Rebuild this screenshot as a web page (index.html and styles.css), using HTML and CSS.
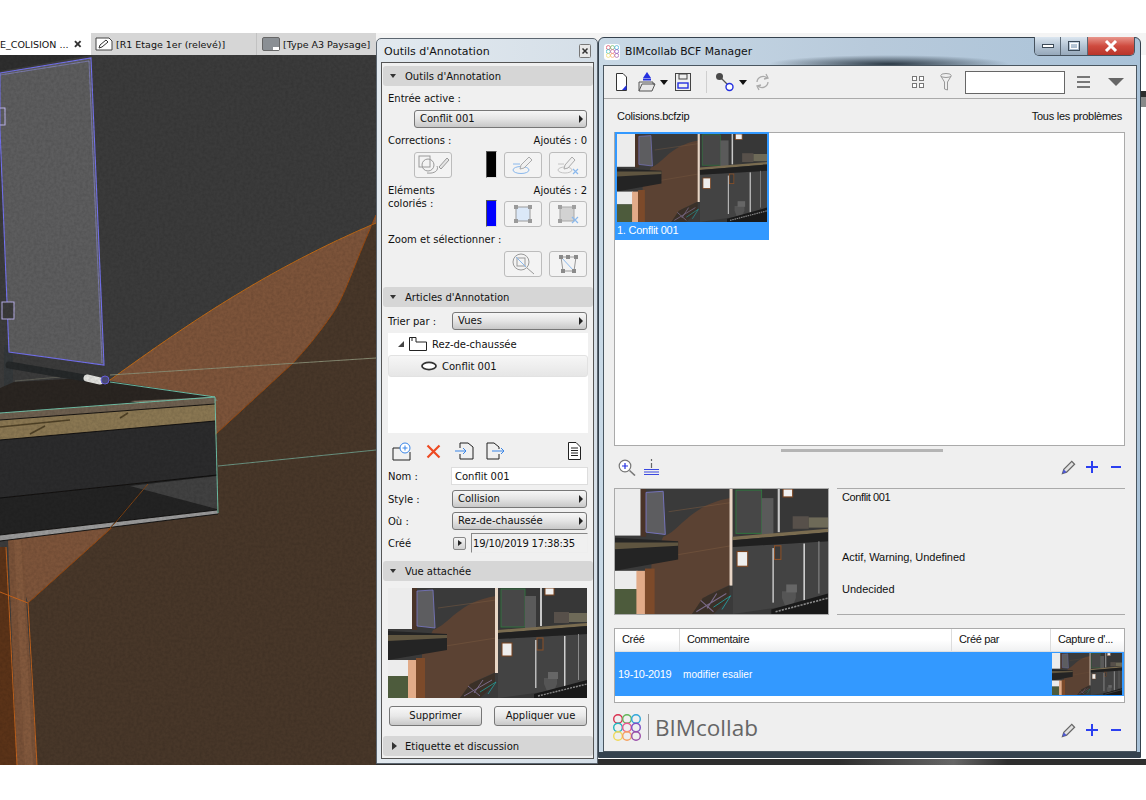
FILE: index.html
```html
<!DOCTYPE html>
<html lang="fr">
<head>
    <meta charset="UTF-8">
    <title>BIMcollab BCF Manager</title>
    <link rel="stylesheet" href="styles.css">
</head>
<body>
    <!-- shared drawings -->
    <svg class="defs" width="0" height="0">
        <symbol id="model-thumb" viewBox="0 0 199 110" preserveAspectRatio="none">
            <rect width="199" height="110" fill="#3a3a3a"/>
            <rect width="24" height="41" fill="#ececec"/>
            <rect x="24" width="5" height="42" fill="#4a3428"/>
            <polygon points="29,3 45,2 47,40 29,38" fill="#5d5d60" stroke="#7a78c8" stroke-width="0.8"/>
            <path d="M45 42 C62 36 70 14 108 8 V84 L86 94 L72 110 H34 V66 Z" fill="#5b4233"/>
            <path d="M50 20 L108 12 M45 60 L108 50" stroke="#7a5a40" stroke-width="0.5"/>
            <polygon points="0,43 59,46 59,62 0,72" fill="#242424"/>
            <polygon points="0,47 59,47 59,50 0,53" fill="#5f5540"/>
            <rect y="72" width="21" height="16" fill="#ececec"/>
            <rect y="88" width="22" height="22" fill="#4d5b3c"/>
            <rect x="20" y="72" width="8" height="38" fill="#e2ab88"/>
            <rect x="28" y="70" width="9" height="40" fill="#7c4a2a"/>
            <rect x="107" width="3" height="85" fill="#e8d6c6"/>
            <rect x="110" width="89" height="110" fill="#373737"/>
            <rect x="113" y="1" width="24" height="38" fill="#474747" stroke="#2f7a3f" stroke-width="0.8"/>
            <rect x="137" y="8" width="11" height="32" fill="#5a5a5a"/>
            <rect x="152" width="2" height="38" fill="#c8c8c8"/>
            <rect x="157" y="0" width="9" height="7" fill="#f0f0f0" stroke="#7a4420"/>
            <rect x="166" y="24" width="15" height="11" fill="#57504a"/>
            <rect x="181" y="25" width="18" height="9" fill="#6e6a58"/>
            <polygon points="110,51 199,46 199,98 110,110" fill="#434343"/>
            <polygon points="110,42 199,35 199,38 110,45" fill="#7a6c50"/>
            <polygon points="110,45 199,38 199,46 110,51" fill="#202020"/>
            <rect x="114" y="55" width="10" height="13" fill="#eeeeee" stroke="#7a4420"/>
            <rect x="149" y="50" width="6" height="12" fill="#3a3a3a" stroke="#8a5028"/>
            <rect x="147" y="52" width="1.5" height="48" fill="#bbbbbb"/>
            <rect x="176" y="48" width="1.5" height="50" fill="#cfcfcf"/>
            <rect x="190" y="46" width="1" height="46" fill="#8a8a8a"/>
            <path d="M156 90 h13 v6 l-3 7 h-7 l-3 -7 z" fill="#555555"/>
            <rect x="160" y="84" width="10" height="7" fill="#666666"/>
            <polygon points="146,110 146,106 199,92 199,110" fill="#191919"/>
            <path d="M150 108 L199 96" stroke="#8a8a8a" stroke-width="1.4" stroke-dasharray="2 1"/>
            <polygon points="72,110 82,96 107,85 107,96 92,110" fill="#3a3028"/>
            <path d="M76 108 L104 92 M86 105 L95 92 M80 98 L92 108" stroke="#7a6a88" stroke-width="1"/>
            <path d="M92 104 L108 94 L100 106" stroke="#2aa" stroke-width="0.7" fill="none"/>
        </symbol>
        <symbol id="logo-rings" viewBox="0 0 28 27">
            <g fill="none" stroke-width="1.4">
                <circle cx="5" cy="5" r="4.3" stroke="#d9304f"/>
                <circle cx="14" cy="5" r="4.3" stroke="#62b65a"/>
                <circle cx="23" cy="5" r="4.3" stroke="#2fa6d9"/>
                <circle cx="5" cy="13.5" r="4.3" stroke="#1fb3bd"/>
                <circle cx="14" cy="13.5" r="4.3" stroke="#e8588f"/>
                <circle cx="23" cy="13.5" r="4.3" stroke="#7c4fc4"/>
                <circle cx="5" cy="22" r="4.3" stroke="#f0d95a"/>
                <circle cx="14" cy="22" r="4.3" stroke="#f5a263"/>
                <circle cx="23" cy="22" r="4.3" stroke="#9b4fa8"/>
            </g>
        </symbol>
        <symbol id="pencil" viewBox="0 0 16 16">
            <path d="M1.5 14.5 L3 10 L11.5 1.5 L14.5 4.5 L6 13 Z" fill="#e0e0e0" stroke="#666" stroke-width="1.3"/>
            <path d="M1.5 14.5 L3 10 L6 13 Z" fill="#4a55d8"/>
        </symbol>
        <symbol id="plus" viewBox="0 0 12 12">
            <path d="M6 0 V12 M0 6 H12" stroke="#2b3ff0" stroke-width="2"/>
        </symbol>
        <symbol id="minus" viewBox="0 0 10 12">
            <path d="M0 6 H10" stroke="#2b3ff0" stroke-width="2"/>
        </symbol>
    </svg>

    <div class="desktop">
        <div class="tabs">
            <div class="tab tab-active">
                <span class="tab-name">E_COLISION ...</span>
                <svg class="tab-x" width="8" height="8" viewBox="0 0 8 8"><path d="M1 1 L7 7 M7 1 L1 7" stroke="#333" stroke-width="2"/></svg>
            </div>
            <div class="tab tab-plan">
                <svg width="18" height="14" viewBox="0 0 18 14"><path d="M1 1 H14 L17 4 V13 H1 Z" fill="#fff" stroke="#444"/><path d="M4 11 L5 8 L11 3 L13 5 L7 10 Z" fill="#fff" stroke="#333"/></svg>
                <span>[R1 Etage 1er (relevé)]</span>
            </div>
            <div class="tab tab-layout">
                <svg width="18" height="14" viewBox="0 0 18 14"><rect x="0.5" y="0.5" width="17" height="13" rx="1.5" fill="#8a8f94" stroke="#666"/><rect x="11" y="10" width="6" height="3" fill="#fff"/></svg>
                <span>[Type A3 Paysage]</span>
            </div>
            <div class="tab-rest"></div>
        </div>

        <div class="main">
            <svg class="scene" viewBox="0 55 376 710" width="376" height="710">
                <defs>
                    <filter id="grain" x="0" y="0" width="100%" height="100%">
                        <feTurbulence type="fractalNoise" baseFrequency="0.35" numOctaves="2" seed="4"/>
                        <feColorMatrix values="0 0 0 0 0  0 0 0 0 0  0 0 0 0 0  0 0 0 0.2 -0.06"/>
                    </filter>
                </defs>
                <rect x="0" y="55" width="376" height="710" fill="#3b3b3b"/>
                <polygon points="0,55 92,55 0,71" fill="#2e2e2e"/>
                <path d="M376 215 C352 270 345 295 333 313 C318 335 305 350 293 363 L217 433 L28 603 L37 765 H376 Z" fill="#483729"/>
                <path d="M110 380 C190 322 270 268 376 223 V215 C352 270 345 295 333 313 C318 335 305 350 293 363 L217 433 L28 603 L8 540 V400 Z" fill="#7d543a"/>
                <path d="M110 380 C190 322 270 268 376 223" fill="none" stroke="#c06a14"/>
                <path d="M376 215 C352 270 345 295 333 313 C318 335 305 350 293 363 L217 433 L28 603" fill="none" stroke="#9a4a10"/>
                <polygon points="0,547 6,547 17,765 0,765" fill="#5b3318"/>
                <polygon points="8,540 22,538 37,765 17,765" fill="#7a5238"/>
                <polygon points="14,540 21,540 33,765 25,765" fill="#83593d"/>
                <path d="M6 547 L17 765 M28 603 L37 765 M0 592 L28 603" fill="none" stroke="#d0661a" stroke-width="0.9"/>
                <path d="M110 375 L376 358" stroke="#8c9178" stroke-width="0.9"/>
                <rect x="4" y="345" width="9" height="45" fill="#34383a"/>
                <polygon points="0,388 14,382 85,378 110,381 215,397 0,413" fill="#2a2521"/>
                <polygon points="130,401 215,397 218,401 140,403" fill="#7b6d5d"/>
                <polygon points="0,413 215,398 215,404 0,420" fill="#6d5f4f"/>
                <polygon points="0,420 215,404 215,421 0,440" fill="#8a7752"/>
                <path d="M0 427 L70 420 M30 434 L45 426 M120 418 L128 413" stroke="#4f4126" stroke-width="1.5"/>
                <polygon points="0,440 215,421 217,475 0,498" fill="#2b2b2c"/>
                <polygon points="0,498 217,475 217,510 0,535" fill="#232323"/>
                <polygon points="130,486 217,476 217,509" fill="#414141"/>
                <polygon points="0,535 217,510 218,514 0,541" fill="#9a9a9a"/>
                <path d="M0 420 L215 404 M0 440 L215 421 M0 498 L217 475 M0 535 L217 510 M0 541 L218 514" fill="none" stroke="#0c0c0c" stroke-width="0.9"/>
                <path d="M148 484 L115 523 L108 530" stroke="#8a4a16" stroke-width="0.9"/>
                <path d="M110 382 L215 397 L218 513 M0 413 L215 397" fill="none" stroke="#72cdb4" stroke-width="0.9"/>
                <path d="M218 466 L376 450" stroke="#6f9e8c" stroke-width="0.9"/>
                <path d="M15 381 L60 377" stroke="#6b6b60" stroke-width="0.7"/>
                <polygon points="0,73 91,58 104,365 9,352 0,130" fill="#5d5d5e"/>
                <polygon points="0,73 91,58 104,365 9,352 0,130" fill="none" stroke="#7472f0" stroke-width="1.1"/>
                <path d="M0 75 L89 61 L102 363" fill="none" stroke="#8f8ee0" stroke-width="0.6"/>
                <rect x="-2" y="108" width="7" height="17" fill="none" stroke="#c0b8f0"/>
                <rect x="2" y="302" width="12" height="17" fill="#3a3a3a" stroke="#b8b0e8"/>
                <path d="M9 365 L85 378" stroke="#252829" stroke-width="7" stroke-linecap="round"/>
                <path d="M87 378 L100 381" stroke="#e4e4e0" stroke-width="7" stroke-linecap="round"/>
                <circle cx="105" cy="380" r="4" fill="#4b4b78" stroke="#6a62e0"/>
                <rect x="0" y="55" width="376" height="710" filter="url(#grain)"/>
            </svg>
            <div class="behind">
                <div class="behind-dark"></div>
                <div class="behind-tab"></div>
                <div class="behind-strip"></div>
            </div>
        </div>

        <!-- annotation palette -->
        <div class="window palette">
            <div class="pal-title">
                <span>Outils d'Annotation</span>
                <svg class="pal-close" width="12" height="14" viewBox="0 0 12 14"><rect x="0.5" y="0.5" width="11" height="13" rx="1" fill="#e8e8e8" stroke="#777"/><path d="M3.5 4.5 L8.5 9.5 M8.5 4.5 L3.5 9.5" stroke="#333" stroke-width="1.5"/></svg>
            </div>
            <div class="pal-body">
                <div class="sec-head"><i class="arrow-down"></i>Outils d'Annotation</div>
                <div class="sec tools">
                    <div class="lbl lbl-first">Entrée active :</div>
                    <div class="drop drop-active">Conflit 001</div>

                    <div class="lbl-row corr-labels"><span>Corrections :</span><span>Ajoutés : 0</span></div>
                    <div class="btn-row">
                        <div class="tool-btn tool-wide">
                            <svg width="36" height="24" viewBox="0 0 36 24" fill="none" stroke="#9a9a9a"><rect x="4" y="3" width="11" height="11"/><circle cx="13" cy="12" r="6"/><path d="M12 20 C20 21 24 17 22 13"/><path d="M24 14 L32 5 L34 7 L26 16 Z" fill="#e4e4e4"/></svg>
                        </div>
                        <div class="swatch swatch-black"></div>
                        <div class="tool-btn">
                            <svg width="26" height="22" viewBox="0 0 26 22" fill="none"><ellipse cx="11" cy="16" rx="8" ry="3.5" stroke="#8ab8ec"/><path d="M3 10 H10" stroke="#8ab8ec"/><path d="M10 15 L11 11 L19 3 L22 6 L14 14 Z" fill="#f0f0f0" stroke="#aaa"/></svg>
                        </div>
                        <div class="tool-btn">
                            <svg width="26" height="22" viewBox="0 0 26 22" fill="none"><ellipse cx="10" cy="16" rx="7" ry="3" stroke="#c4c4c4"/><path d="M3 10 H9" stroke="#c4c4c4"/><path d="M9 15 L10 11 L17 3 L20 6 L13 14 Z" fill="#f0f0f0" stroke="#aaa"/><path d="M18 15 L23 20 M23 15 L18 20" stroke="#8ab8ec" stroke-width="1.2"/></svg>
                        </div>
                    </div>

                    <div class="lbl-row elem-labels"><span>Eléments</span><span>Ajoutés : 2</span></div>
                    <div class="btn-row elem-row">
                        <span class="elem-lbl">coloriés :</span>
                        <div class="swatch swatch-blue"></div>
                        <div class="tool-btn">
                            <svg width="22" height="20" viewBox="0 0 22 20"><rect x="4" y="3" width="14" height="14" fill="#dbe8f8" stroke="#9a9a9a"/><g fill="#9a9a9a"><rect x="2" y="1" width="4" height="4"/><rect x="16" y="1" width="4" height="4"/><rect x="2" y="15" width="4" height="4"/><rect x="16" y="15" width="4" height="4"/></g></svg>
                        </div>
                        <div class="tool-btn">
                            <svg width="24" height="20" viewBox="0 0 24 20"><rect x="4" y="3" width="14" height="14" fill="#d2d2d2" stroke="#a8a8a8"/><g fill="#a0a0a0"><rect x="2" y="1" width="4" height="4"/><rect x="16" y="1" width="4" height="4"/><rect x="2" y="15" width="4" height="4"/></g><path d="M16 13 L22 19 M22 13 L16 19" stroke="#8ab8ec" stroke-width="1.2"/></svg>
                        </div>
                    </div>

                    <div class="lbl zoom-lbl">Zoom et sélectionner :</div>
                    <div class="btn-row zoom-row">
                        <div class="tool-btn">
                            <svg width="26" height="24" viewBox="0 0 26 24" fill="none" stroke="#999"><circle cx="11" cy="10" r="8"/><rect x="7" y="6" width="8" height="8"/><path d="M6 5 L16 15" stroke="#8ab8ec"/><path d="M17 16 L24 22"/></svg>
                        </div>
                        <div class="tool-btn">
                            <svg width="24" height="22" viewBox="0 0 24 22"><path d="M5 4 H20 L18 18 H7 Z" fill="none" stroke="#999"/><path d="M5 4 L18 18" stroke="#8ab8ec"/><g fill="#8a8a8a"><rect x="3" y="2" width="4" height="4"/><rect x="10" y="2" width="4" height="4"/><rect x="18" y="2" width="4" height="4"/><rect x="5" y="16" width="4" height="4"/><rect x="16" y="16" width="4" height="4"/></g></svg>
                        </div>
                    </div>
                </div>

                <div class="sec-head"><i class="arrow-down"></i>Articles d'Annotation</div>
                <div class="sec articles">
                    <div class="field-row trier">
                        <span>Trier par :</span>
                        <div class="drop">Vues</div>
                    </div>
                    <div class="tree">
                        <div class="tree-row">
                            <i class="tree-arrow"></i>
                            <svg width="18" height="14" viewBox="0 0 18 14" fill="none" stroke="#222"><path d="M0.5 13.5 V0.5 H7 V5 H17.5 V13.5 Z"/><path d="M3 1 V4" stroke="#222"/></svg>
                            <span>Rez-de-chaussée</span>
                        </div>
                        <div class="tree-row tree-sel">
                            <svg width="16" height="10" viewBox="0 0 16 10"><ellipse cx="8" cy="5" rx="7" ry="3.6" fill="#fff" stroke="#333" stroke-width="1.8"/></svg>
                            <span>Conflit 001</span>
                        </div>
                    </div>
                    <div class="art-tools">
                        <svg width="20" height="19" viewBox="0 0 20 19" fill="none"><path d="M1 6 H10 M1 6 V18 H18 V10" stroke="#222"/><circle cx="13" cy="6" r="5" fill="#fff" stroke="#3a86e8"/><path d="M13 3.5 V8.5 M10.5 6 H15.5" stroke="#3a86e8"/></svg>
                        <svg class="red-x" width="15" height="15" viewBox="0 0 15 15"><path d="M1.5 1.5 L13.5 13.5 M13.5 1.5 L1.5 13.5" stroke="#ee4a22" stroke-width="2.2"/></svg>
                        <svg class="doc-in" width="19" height="18" viewBox="0 0 19 18" fill="none"><path d="M5 6 V1 H13 L18 5 V17 H5 V12" stroke="#222"/><path d="M0 9 H11 M8 6 L11 9 L8 12" stroke="#3a86e8"/></svg>
                        <svg class="doc-out" width="19" height="18" viewBox="0 0 19 18" fill="none"><path d="M13 7 V5 L8 1 H1 V17 H13 V12" stroke="#222"/><path d="M6 9 H18 M15 6 L18 9 L15 12" stroke="#3a86e8"/></svg>
                        <svg class="doc-list" width="13" height="18" viewBox="0 0 13 18" fill="#fff" stroke="#222"><path d="M0.5 0.5 H8 L12.5 5 V17.5 H0.5 Z"/><path d="M3 6 H10 M3 8.5 H10 M3 11 H10 M3 13.5 H10"/></svg>
                    </div>
                    <div class="field-row nom">
                        <span>Nom :</span>
                        <div class="text-field">Conflit 001</div>
                    </div>
                    <div class="field-row style-row">
                        <span>Style :</span>
                        <div class="drop">Collision</div>
                    </div>
                    <div class="field-row ou">
                        <span>Où :</span>
                        <div class="drop">Rez-de-chaussée</div>
                    </div>
                    <div class="field-row cree">
                        <span>Créé</span>
                        <div class="mini-btn"></div>
                        <div class="date-field">19/10/2019 17:38:35</div>
                    </div>
                </div>

                <div class="sec-head"><i class="arrow-down"></i>Vue attachée</div>
                <div class="sec attached">
                    <svg class="thumb attached-img"><use href="#model-thumb"/></svg>
                    <div class="attached-btns">
                        <div class="push">Supprimer</div>
                        <div class="push">Appliquer vue</div>
                    </div>
                </div>

                <div class="sec-head"><i class="arrow-right"></i>Etiquette et discussion</div>
            </div>
        </div>

        <!-- BCF manager -->
        <div class="window manager">
            <div class="mgr-title">
                <div class="mgr-icon"><svg width="13" height="13"><use href="#logo-rings"/></svg></div>
                <span>BIMcollab BCF Manager</span>
                <div class="caption">
                    <div class="cap-btn cap-min"><svg width="12" height="6" viewBox="0 0 12 6"><rect x="0.5" y="1.5" width="11" height="3" fill="#fff" stroke="#3c4a58"/></svg></div>
                    <div class="cap-btn cap-max"><svg width="12" height="10" viewBox="0 0 12 10"><rect x="0.5" y="0.5" width="11" height="9" fill="none" stroke="#3c4a58"/><rect x="2.5" y="2.5" width="7" height="5" fill="none" stroke="#fff"/></svg></div>
                    <div class="cap-btn cap-close"><svg width="14" height="12" viewBox="0 0 14 12"><path d="M2 1 L12 11 M12 1 L2 11" stroke="#fff" stroke-width="3"/></svg></div>
                </div>
            </div>
            <div class="client">
                <div class="toolbar">
                    <svg class="tb-new" width="11" height="18" viewBox="0 0 11 18"><path d="M0.5 0.5 H7 L10.5 4 V17.5 H0.5 Z" fill="#fff" stroke="#333"/><path d="M6 17 L10.5 17 V12 Z" fill="#2430e0"/></svg>
                    <svg class="tb-open" width="18" height="20" viewBox="0 0 18 20"><path d="M9 0 L13 6 H5 Z" fill="#2430e0"/><rect x="5" y="6.5" width="8" height="2" fill="#2430e0"/><path d="M1 10 H15 V12 H17 L14 19 H1 Z" fill="#e8e8e8" stroke="#555"/><path d="M1 19 L4 12 H17" fill="none" stroke="#555"/></svg>
                    <i class="caret tb-caret"></i>
                    <svg class="tb-save" width="16" height="18" viewBox="0 0 16 18" fill="none"><rect x="0.5" y="0.5" width="15" height="17" stroke="#444"/><rect x="4" y="1" width="8" height="5" stroke="#444"/><rect x="3" y="10" width="10" height="5" stroke="#2430e0" stroke-width="1.4"/></svg>
                    <div class="tb-sep"></div>
                    <svg class="tb-node" width="20" height="20" viewBox="0 0 20 20"><path d="M5 5 L14 14" stroke="#555" stroke-width="1.2"/><circle cx="4.5" cy="4.5" r="3.5" fill="#4a4a4a"/><circle cx="14.5" cy="15" r="3.5" fill="#fff" stroke="#2430e0" stroke-width="1.4"/></svg>
                    <i class="caret"></i>
                    <svg class="tb-refresh" width="17" height="18" viewBox="0 0 17 18" fill="none" stroke="#aaa" stroke-width="1.3"><path d="M3 9 A6 6 0 0 1 13 5"/><path d="M14 9 A6 6 0 0 1 4 13"/><path d="M12 1 L14 5 L10 6"/><path d="M5 17 L3 13 L7 12"/></svg>
                    <div class="tb-right">
                        <svg width="12" height="12" viewBox="0 0 12 12" fill="#fff" stroke="#777"><rect x="0.5" y="0.5" width="4" height="4"/><rect x="7.5" y="0.5" width="4" height="4"/><rect x="0.5" y="7.5" width="4" height="4"/><rect x="7.5" y="7.5" width="4" height="4"/></svg>
                        <svg class="tb-funnel" width="12" height="18" viewBox="0 0 12 18" fill="none" stroke="#999"><ellipse cx="6" cy="2.5" rx="5.2" ry="2"/><path d="M0.8 3 L4.5 9 V16 L7.5 17 V9 L11.2 3"/></svg>
                        <div class="tb-search"></div>
                        <div class="tb-menu"><i></i><i></i><i></i></div>
                        <i class="tb-down"></i>
                    </div>
                </div>

                <div class="file-row"><span>Colisions.bcfzip</span><span>Tous les problèmes</span></div>

                <div class="issue-list">
                    <div class="issue-card">
                        <svg class="thumb issue-img"><use href="#model-thumb"/></svg>
                        <div class="issue-label">1. Conflit 001</div>
                    </div>
                </div>
                <div class="splitter"></div>

                <div class="detail-tools">
                    <svg width="18" height="17" viewBox="0 0 18 17" fill="none"><circle cx="7" cy="7" r="5.8" fill="#fff" stroke="#777" stroke-width="1.2"/><path d="M7 4 V10 M4 7 H10" stroke="#2430e0" stroke-width="1.2"/><path d="M11.5 11.5 L17 16.5" stroke="#777" stroke-width="1.6"/></svg>
                    <svg class="info-lines" width="15" height="17" viewBox="0 0 15 17" fill="none"><path d="M7.5 0 V2 M7.5 4 V9" stroke="#666" stroke-width="1.2"/><path d="M0 10.5 H15 M0 13 H15 M0 15.5 H15" stroke="#3a48e0"/></svg>
                    <div class="edit-group">
                        <svg width="15" height="15"><use href="#pencil"/></svg>
                        <svg width="12" height="12"><use href="#plus"/></svg>
                        <svg width="10" height="12"><use href="#minus"/></svg>
                    </div>
                </div>

                <div class="detail">
                    <svg class="thumb detail-img"><use href="#model-thumb"/></svg>
                    <div class="detail-text">
                        <div class="detail-name">Conflit 001</div>
                        <div class="detail-status">Actif, Warning, Undefined</div>
                        <div class="detail-res">Undecided</div>
                    </div>
                </div>

                <div class="comments">
                    <div class="c-row c-head">
                        <div class="c-date">Créé</div>
                        <div class="c-text">Commentaire</div>
                        <div class="c-by">Créé par</div>
                        <div class="c-shot">Capture d'...</div>
                    </div>
                    <div class="c-row c-sel">
                        <div class="c-date">19-10-2019</div>
                        <div class="c-text">modifier esalier</div>
                        <div class="c-by"></div>
                        <div class="c-shot"><svg class="thumb c-img"><use href="#model-thumb"/></svg></div>
                    </div>
                </div>

                <div class="mgr-foot">
                    <svg class="foot-logo" width="28" height="27"><use href="#logo-rings"/></svg>
                    <div class="logo-sep"></div>
                    <span class="logo-text">BIMcollab</span>
                    <div class="edit-group">
                        <svg width="15" height="15"><use href="#pencil"/></svg>
                        <svg width="12" height="12"><use href="#plus"/></svg>
                        <svg width="10" height="12"><use href="#minus"/></svg>
                    </div>
                </div>
            </div>
        </div>
    </div>
</body>
</html>
```

FILE: styles.css
```css
:root {
    --panel: #f0f0f0;
    --head: #d6d6d6;
    --line: #aaaaaa;
    --select: #3399ff;
}

* {
    box-sizing: border-box;
}

body {
    margin: 0;
    background: #fff;
    font-family: "DejaVu Sans", sans-serif;
    font-size: 10px;
    color: #111;
}

.defs {
    position: absolute;
}

.desktop {
    position: relative;
    width: 1146px;
    height: 800px;
    padding-top: 33px;
    overflow: hidden;
}

/* tab bar of the host application */
.tabs {
    display: flex;
    height: 22px;
    background: #d6d6d6;
    font-size: 9.5px;
}

.tab {
    display: flex;
    align-items: center;
    gap: 3px;
    border-right: 1px solid #c2c2c2;
}

.tab-active {
    width: 91px;
    background: #fff;
    gap: 6px;
    overflow: hidden;
    justify-content: flex-end;
    padding-right: 9px;
    border: none;
}

.tab-name {
    white-space: nowrap;
}

.tab-plan {
    width: 166px;
    padding-left: 4px;
}

.tab-layout {
    width: 119px;
    padding-left: 5px;
    border: none;
}

.tab-rest {
    flex: 1;
    background: #f4f4f4;
}

.main {
    display: flex;
    height: 710px;
}

.scene {
    display: block;
    flex: none;
}

.behind {
    flex: 1;
    display: flex;
    flex-direction: column;
    background: #fff;
}

.behind-dark {
    height: 6px;
    margin-top: 36px;
    background: #2e2e2e;
}

.behind-tab {
    height: 10px;
    background: #8a8a8a;
}

.behind-strip {
    height: 6px;
    margin-top: auto;
    background: linear-gradient(90deg, #2e2e2e 60%, #666 75%, #2e2e2e 82%);
}

.window {
    position: absolute;
}

/* annotation palette */
.palette {
    left: 376px;
    top: 38px;
    width: 222px;
    height: 726px;
    background: linear-gradient(90deg, #e2e9ef, #d5dfe8);
    border: 1px solid #5c6670;
    border-radius: 5px 5px 0 0;
    padding: 0 3px 4px 4px;
    display: flex;
    flex-direction: column;
}

.pal-title {
    height: 23px;
    flex: none;
    display: flex;
    align-items: center;
    justify-content: space-between;
    padding: 1px 3px 0 3px;
    font-size: 11px;
}

.pal-body {
    flex: 1;
    background: var(--panel);
    border: 1px solid #555;
    padding: 3px 0 0 1px;
    overflow: hidden;
}

.sec-head {
    height: 20px;
    display: flex;
    align-items: center;
    background: var(--head);
    border-radius: 3px;
    padding-left: 7px;
}

.arrow-down {
    width: 0;
    height: 0;
    margin-right: 9px;
    border-left: 3.5px solid transparent;
    border-right: 3.5px solid transparent;
    border-top: 4px solid #333;
}

.arrow-right {
    width: 0;
    height: 0;
    margin: 0 8px 0 2px;
    border-top: 4px solid transparent;
    border-bottom: 4px solid transparent;
    border-left: 5px solid #333;
}

.sec {
    padding: 0 6px 0 5px;
    display: flex;
    flex-direction: column;
}

.lbl {
    height: 12px;
    line-height: 12px;
}

.lbl-first {
    margin-top: 7px;
}

.lbl-row {
    display: flex;
    justify-content: space-between;
    height: 12px;
    line-height: 12px;
}

.drop {
    position: relative;
    flex: 1;
    height: 18px;
    line-height: 16px;
    padding-left: 5px;
    border: 1px solid #777;
    border-radius: 3px;
    background: linear-gradient(#f6f6f6, #e4e4e4 50%, #c8c8c8);
}

.drop::after {
    content: "";
    position: absolute;
    right: 3px;
    top: 4px;
    border-top: 4px solid transparent;
    border-bottom: 4px solid transparent;
    border-left: 4px solid #222;
}

.drop-active {
    flex: none;
    margin: 5px 0 0 26px;
}

.corr-labels {
    margin-top: 7px;
}

.btn-row {
    display: flex;
    justify-content: flex-end;
    align-items: flex-end;
    gap: 7px;
    margin-top: 4px;
    height: 27px;
}

.tool-btn {
    width: 38px;
    height: 26px;
    display: flex;
    align-items: center;
    justify-content: center;
    border: 1px solid #bcbcbc;
    border-radius: 3px;
    background: #f3f3f3;
}

.tool-wide {
    margin-left: 26px;
    margin-right: auto;
}

.swatch {
    width: 11px;
    height: 27px;
    border: 1px solid;
    border-color: #555 #ddd #ddd #555;
}

.swatch-black {
    background: #000;
}

.swatch-blue {
    background: #0000ff;
}

.elem-labels {
    margin-top: 7px;
}

.elem-row {
    margin-top: 0;
    height: 30px;
}

.elem-lbl {
    margin-right: auto;
    align-self: flex-start;
    line-height: 13px;
}

.zoom-lbl {
    margin-top: 7px;
}

.zoom-row {
    margin-top: 5px;
    height: 26px;
    margin-bottom: 10px;
}

.field-row {
    display: flex;
    align-items: center;
}

.field-row > span {
    flex: none;
    width: 64px;
}

.trier {
    margin-top: 5px;
}

.tree {
    height: 100px;
    margin: 3px -1px 0 0;
    background: #fff;
}

.tree-row {
    height: 22px;
    display: flex;
    align-items: center;
}

.tree-row span {
    margin-left: 5px;
}

.tree-arrow {
    width: 0;
    height: 0;
    margin: 0 5px 0 10px;
    border-bottom: 6px solid #444;
    border-left: 6px solid transparent;
}

.tree-sel {
    padding-left: 32px;
    border: 1px solid #e2e2e2;
    border-radius: 3px;
    background: linear-gradient(#f6f6f6, #e6e6e6);
}

.tree-sel span {
    margin-left: 5px;
}

.art-tools {
    display: flex;
    align-items: center;
    height: 20px;
    margin-top: 8px;
    padding-left: 4px;
}

.red-x {
    margin-left: 14px;
}

.doc-in {
    margin-left: 14px;
}

.doc-out {
    margin-left: 12px;
}

.doc-list {
    margin-left: auto;
    margin-right: 6px;
}

.nom {
    margin: 6px -1px 0 0;
}

.nom > span {
    width: 63px;
}

.text-field {
    flex: 1;
    height: 18px;
    line-height: 17px;
    padding-left: 3px;
    background: #fff;
    border: 1px solid #ddd;
}

.style-row {
    margin-top: 5px;
}

.ou {
    margin-top: 4px;
}

.cree {
    margin: 3px -1px 8px 0;
}

.cree > span {
    width: 65px;
}

.mini-btn {
    position: relative;
    width: 13px;
    height: 13px;
    margin-right: 5px;
    border: 1px solid #888;
    border-radius: 2px;
    background: linear-gradient(#f4f4f4, #d0d0d0);
}

.mini-btn::after {
    content: "";
    position: absolute;
    left: 4px;
    top: 2px;
    border-top: 3.5px solid transparent;
    border-bottom: 3.5px solid transparent;
    border-left: 4px solid #222;
}

.date-field {
    flex: 1;
    height: 20px;
    line-height: 19px;
    padding-left: 1px;
    letter-spacing: -0.2px;
    white-space: nowrap;
    border: 1px solid;
    border-color: #888 #eee #eee #888;
}

.thumb {
    display: block;
}

.attached-img {
    width: 199px;
    height: 110px;
    margin-top: 7px;
}

.attached-btns {
    display: flex;
    justify-content: space-between;
    margin: 8px 0 10px 1px;
}

.push {
    width: 93px;
    height: 20px;
    line-height: 18px;
    text-align: center;
    border: 1px solid #777;
    border-radius: 3px;
    background: linear-gradient(#f8f8f8, #e8e8e8 50%, #c8c8c8);
}

/* BCF manager */
.manager {
    left: 598px;
    top: 37px;
    width: 543px;
    height: 721px;
    padding: 0 3px 5px 4px;
    display: flex;
    flex-direction: column;
    border: 1px solid #34414d;
    border-radius: 6px 6px 0 0;
    background:
        linear-gradient(transparent calc(100% - 5px), #35424e 0),
        radial-gradient(ellipse 120px 9px at 290px 26px, #2c3a46, transparent),
        linear-gradient(90deg, #c9d9e6, #b8cadb 50%, #a9c2d8);
}

.mgr-title {
    flex: none;
    height: 27px;
    display: flex;
    align-items: center;
    gap: 5px;
    padding-left: 1px;
    font-size: 10.8px;
}

.mgr-icon {
    width: 16px;
    height: 16px;
    display: flex;
    align-items: center;
    justify-content: center;
    background: #fff;
    border-radius: 3px;
}

.caption {
    position: absolute;
    right: 5px;
    top: -1px;
    display: flex;
    height: 19px;
    border: 1px solid #46525e;
    border-top: none;
    border-radius: 0 0 5px 5px;
    overflow: hidden;
}

.cap-btn {
    display: flex;
    align-items: center;
    justify-content: center;
    background: linear-gradient(#dbe6f0, #b4c4d4 50%, #96a8ba);
    border-right: 1px solid #5a6875;
}

.cap-min {
    width: 26px;
}

.cap-max {
    width: 27px;
}

.cap-close {
    width: 46px;
    border-right: none;
    background: linear-gradient(#e8968c, #cf4b3f 50%, #b8342a);
}

.client {
    flex: 1;
    display: flex;
    flex-direction: column;
    background: #efefef;
    border: 1px solid #4a5660;
    font-family: "Liberation Sans", sans-serif;
    font-size: 11px;
    padding: 0 11px 0 10px;
}

.toolbar {
    flex: none;
    display: flex;
    align-items: center;
    height: 33px;
    margin: 0 -11px 0 -10px;
    padding: 0 12px 0 12px;
    border-bottom: 1px solid var(--line);
}

.tb-open {
    margin-left: 11px;
}

.caret {
    width: 0;
    height: 0;
    margin-left: 4px;
    border-left: 4px solid transparent;
    border-right: 4px solid transparent;
    border-top: 5px solid #111;
}

.tb-save {
    margin-left: 7px;
}

.tb-sep {
    width: 1px;
    height: 22px;
    margin: 0 8px 0 15px;
    background: #cfcfcf;
}

.tb-refresh {
    margin-left: 7px;
}

.tb-right {
    margin-left: auto;
    display: flex;
    align-items: center;
}

.tb-funnel {
    margin-left: 16px;
}

.tb-search {
    width: 100px;
    height: 23px;
    margin-left: 13px;
    background: #fff;
    border: 1px solid #666;
}

.tb-menu {
    display: flex;
    flex-direction: column;
    gap: 3px;
    margin-left: 12px;
}

.tb-menu i {
    display: block;
    width: 13px;
    height: 2px;
    background: #777;
}

.tb-down {
    width: 0;
    height: 0;
    margin-left: 18px;
    border-left: 8.5px solid transparent;
    border-right: 8.5px solid transparent;
    border-top: 8px solid #666;
}

.file-row {
    flex: none;
    height: 33px;
    display: flex;
    align-items: center;
    justify-content: space-between;
    padding: 0 3px 0 3px;
    letter-spacing: -0.25px;
}

.issue-list {
    flex: none;
    height: 314px;
    background: #fff;
    border: 1px solid var(--line);
}

.issue-card {
    width: 154px;
    margin-top: -1px;
    padding: 2px 2px 0;
    background: var(--select);
}

.issue-img {
    width: 150px;
    height: 88px;
}

.issue-label {
    height: 18px;
    line-height: 17px;
    color: #fff;
    letter-spacing: -0.25px;
}

.splitter {
    flex: none;
    width: 162px;
    height: 3px;
    margin: 3px 0 0 167px;
    background: #b4b4b4;
}

.detail-tools {
    flex: none;
    height: 30px;
    margin-bottom: 6px;
    display: flex;
    align-items: center;
    padding: 0 4px 0 4px;
}

.info-lines {
    margin-left: 8px;
}

.edit-group {
    margin-left: auto;
    display: flex;
    align-items: center;
    gap: 10px;
}

.edit-group svg + svg + svg {
    margin-left: 3px;
}

.detail {
    flex: none;
    height: 127px;
    display: flex;
    gap: 8px;
}

.detail-img {
    width: 215px;
    height: 127px;
    border: 1px solid var(--line);
}

.detail-text {
    flex: 1;
    padding-left: 5px;
    border-top: 1px solid var(--line);
    border-bottom: 1px solid var(--line);
    display: flex;
    flex-direction: column;
    line-height: 14px;
}

.detail-name {
    margin-top: 1px;
    letter-spacing: -0.4px;
}

.detail-status {
    margin-top: 46px;
    letter-spacing: -0.05px;
}

.detail-res {
    margin-top: 18px;
}

.comments {
    flex: none;
    height: 75px;
    margin-top: 13px;
    background: #fff;
    border: 1px solid var(--line);
}

.c-row {
    display: flex;
}

.c-date {
    width: 65px;
}

.c-text {
    width: 272px;
}

.c-by {
    width: 99px;
}

.c-shot {
    flex: 1;
}

.c-head {
    height: 23px;
    line-height: 21px;
    background: linear-gradient(#fff 50%, #f0f1f2);
    border-bottom: 1px solid #e0e0e0;
    letter-spacing: -0.35px;
}

.c-head > div {
    padding-left: 7px;
    border-right: 1px solid #dcdcdc;
}

.c-head .c-shot {
    border-right: none;
    white-space: nowrap;
    overflow: hidden;
}

.c-sel {
    height: 44px;
    align-items: center;
    background: var(--select);
    color: #fff;
    font-size: 10px;
}

.c-sel .c-date {
    padding-left: 3px;
    font-size: 11px;
    letter-spacing: -0.3px;
}

.c-sel .c-text {
    padding-left: 3px;
    letter-spacing: 0.1px;
}

.c-img {
    width: 70px;
    height: 42px;
    margin-left: 1px;
}

.mgr-foot {
    flex: 1;
    display: flex;
    align-items: center;
    padding-right: 4px;
}

.foot-logo {
    margin-left: -1px;
}

.logo-sep {
    width: 1px;
    height: 26px;
    margin: 0 6px 0 7px;
    background: #9a9a9a;
}

.logo-text {
    font-family: "Open Sans", sans-serif;
    font-size: 22.5px;
    color: #666;
}

.mgr-foot .edit-group {
    align-self: flex-end;
    height: 30px;
    margin-bottom: 6px;
}
```
